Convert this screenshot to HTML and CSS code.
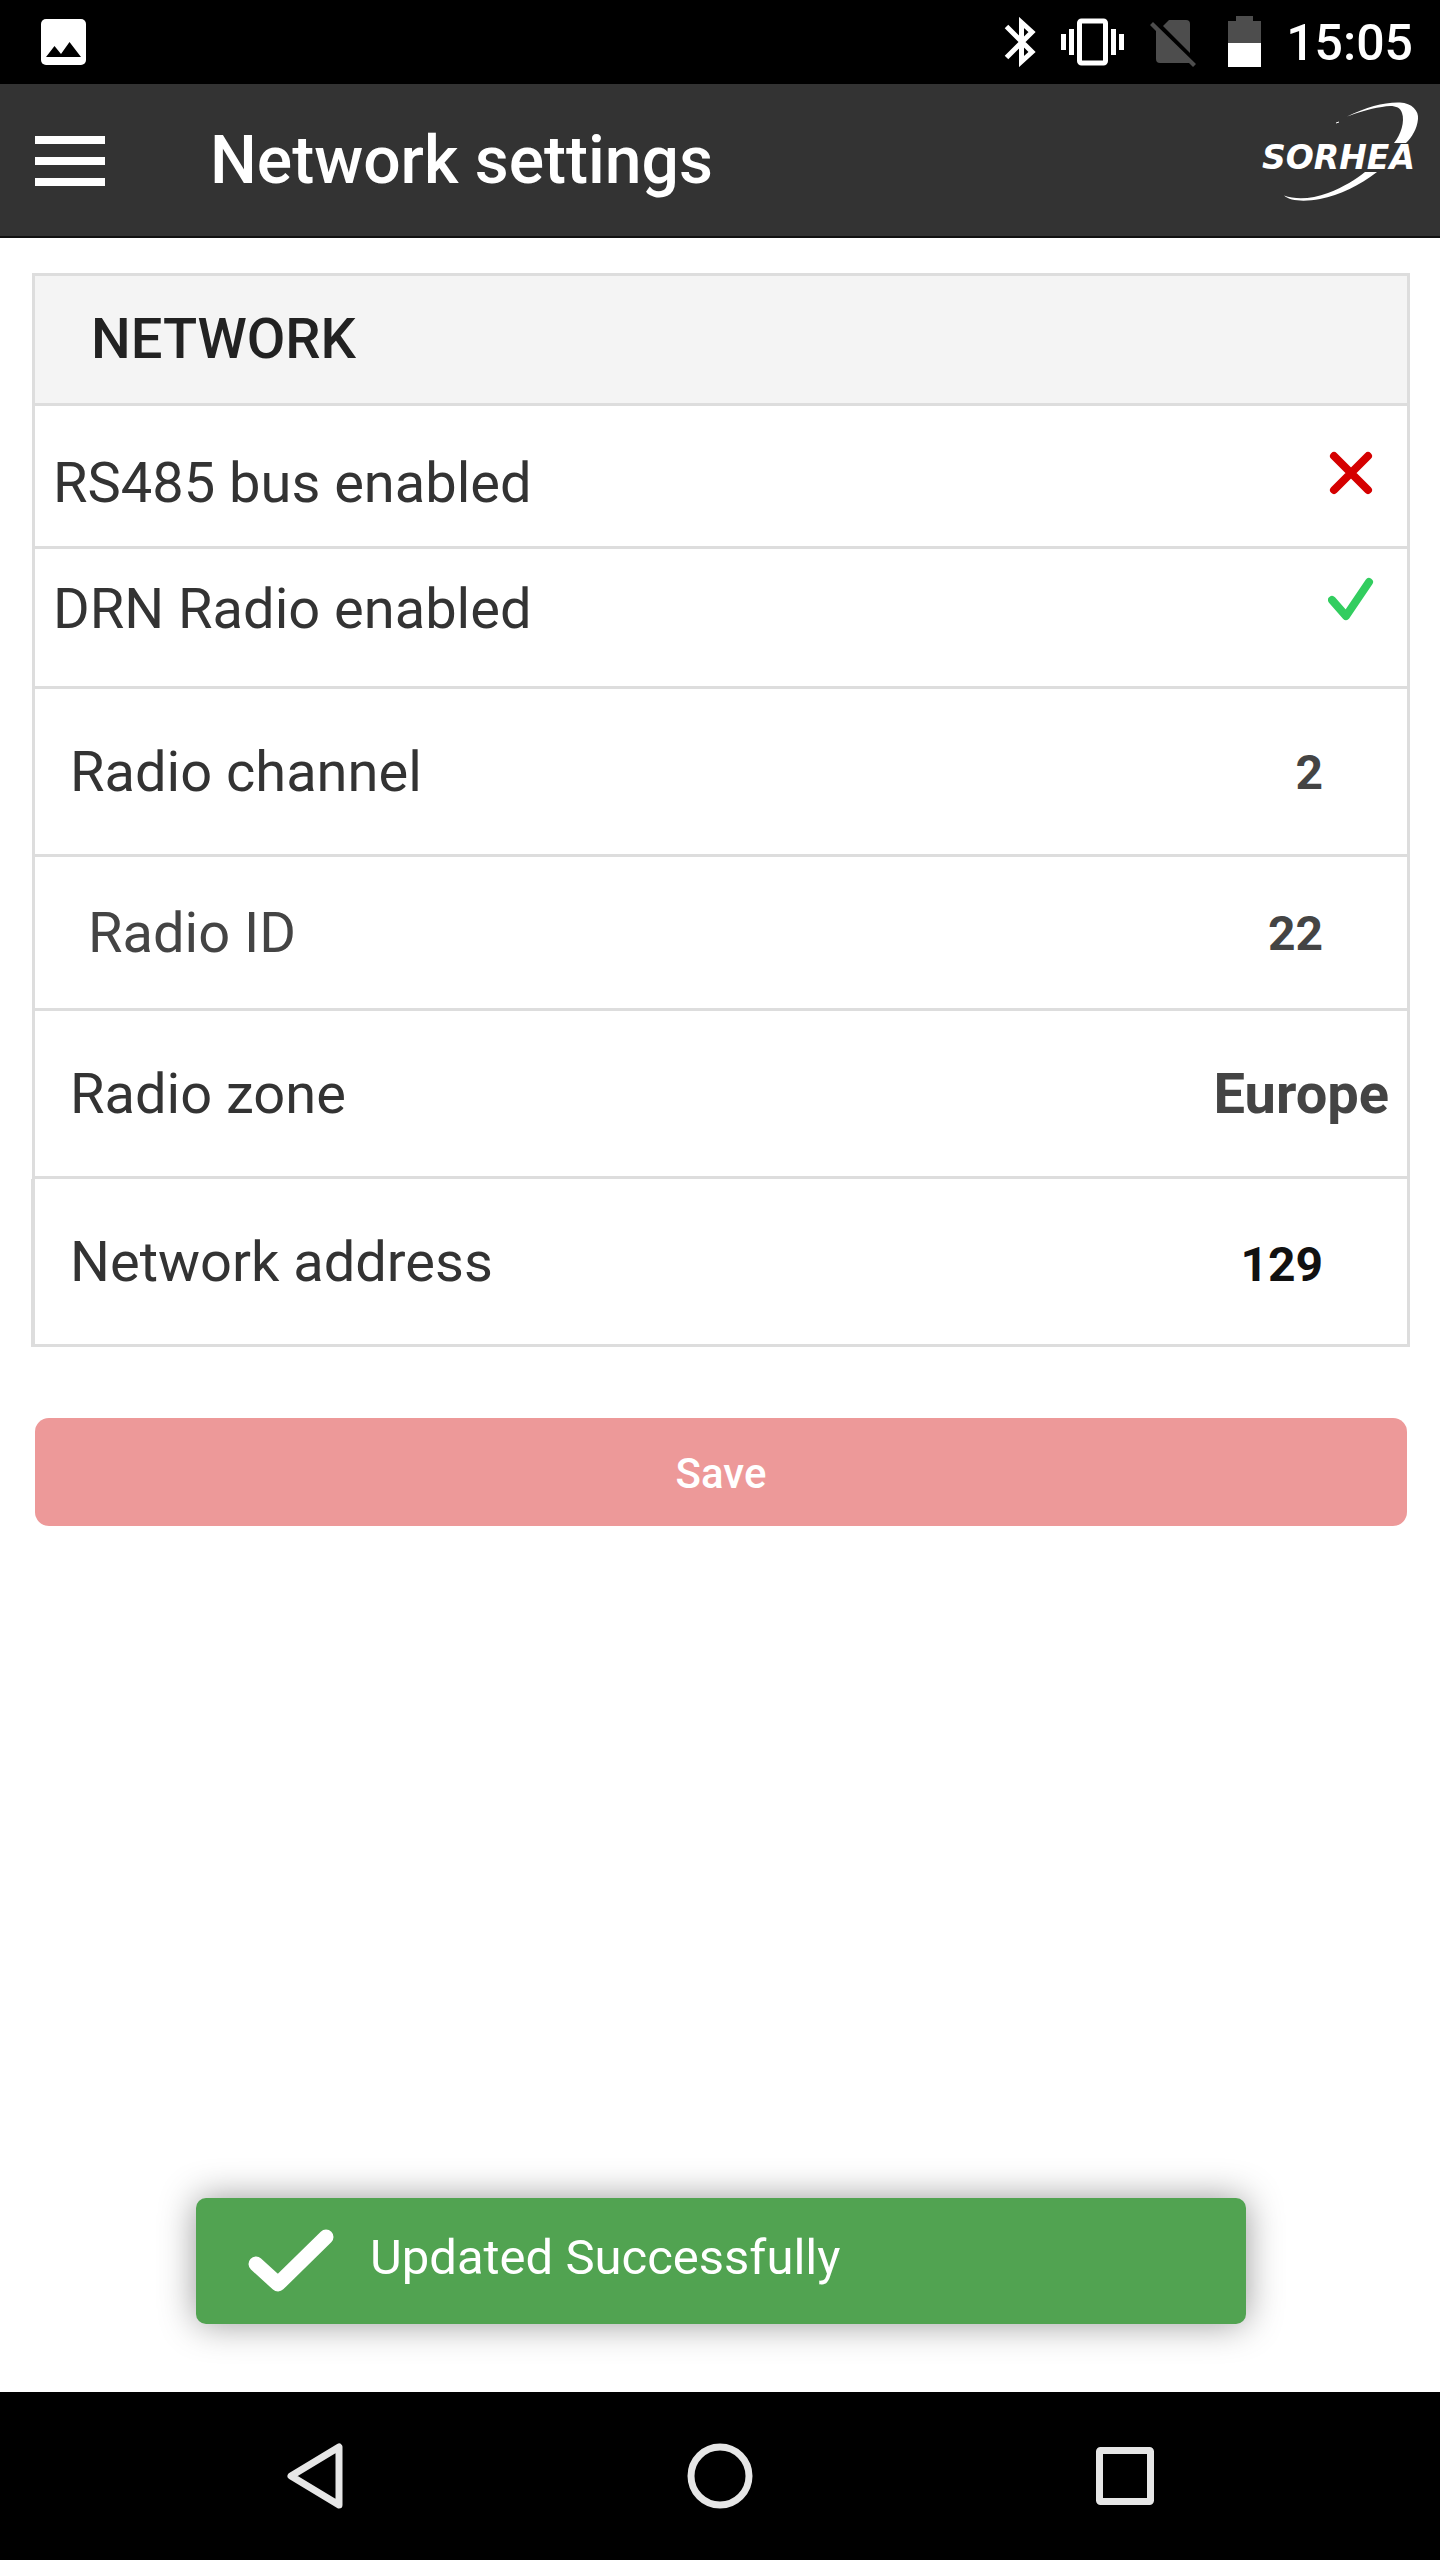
FILE: index.html
```html
<!DOCTYPE html>
<html lang="en">
<head>
<meta charset="utf-8">
<meta name="viewport" content="width=device-width, initial-scale=1">
<title>Network settings</title>
<link rel="stylesheet" href="styles.css">
</head>
<body>
<div class="status-bar">
  <svg width="45" height="46" viewBox="0 0 45 46" role="img" aria-label="Screenshot saved"><rect width="45" height="46" rx="5" fill="#fff"/><path d="M5 38 13.500 27l6.500 8 8.500-12L40 38z" fill="#000"/></svg>
  <div class="status-icons">
    <svg width="32" height="50" viewBox="0 0 32 50" role="img" aria-label="Bluetooth"><path d="M2.500 9.500 28 35 17.500 44.500V5.500L28 15 2.500 40.500" fill="none" stroke="#fff" stroke-width="5"/></svg>
    <svg width="64" height="50" viewBox="0 0 64 50" role="img" aria-label="Vibrate"><rect x="18.500" y="4" width="26" height="42" rx="2" fill="none" stroke="#fff" stroke-width="5"/><path d="M0 17h5v16H0zM8 12h5v26H8zM50 12h5v26h-5zM58 17h5v16h-5z" fill="#fff"/></svg>
    <svg width="46" height="50" viewBox="0 0 46 50" role="img" aria-label="No SIM card"><path d="M19 3h17q4 0 4 4v29L13 9z" fill="#4d4d4d"/><path d="M3 5l43 42-3 3-4-4H10q-4 0-4-4V14L0 8z" fill="#4d4d4d"/></svg>
    <svg class="battery" width="33" height="52" viewBox="0 0 33 52" role="img" aria-label="Battery half full"><path d="M8 0h17v5h8v22H0V5h8z" fill="#4d4d4d"/><path d="M0 27h33v24H0z" fill="#fff"/></svg>
    <time class="clock">15:05</time>
  </div>
</div>
<header class="app-bar">
  <button class="menu-button" type="button" aria-label="Menu"><svg width="70" height="50" viewBox="0 0 70 50"><path d="M0 0h70v8H0zM0 21h70v8H0zM0 42h70v8H0z" fill="#fff"/></svg></button>
  <h1 class="title">Network settings</h1>
  <svg width="180" height="120" viewBox="0 0 180 120" role="img" aria-label="Sorhea"><path d="M95 15.500C115 6 132 1 148 1.500C160 2 167 10 166 18C165 28 160 36 154 42H142C149 34 153 20 150 12C148 5 140 4 130 6C116 8 105 12 95 15.500zM125 71C108 84 88 94 68 98C52 101 38 100 32 94.500C44 99 60 98 76 92C92 86 104 78 113 71z" fill="#fff"/><path d="M84 22l3-1" stroke="#fff"/><text class="logo-text" x="10" y="68">SORHEA</text></svg>
</header>
<main class="content">
  <form class="form">
    <section class="card">
      <h2 class="card-title">NETWORK</h2>
      <div class="row row-bus"><span>RS485 bus enabled</span><svg width="46" height="46" viewBox="0 0 46 46" role="img" aria-label="No"><path d="M6 6 40 40M40 6 6 40" fill="none" stroke="#d50000" stroke-width="8" stroke-linecap="round"/></svg></div>
      <div class="row row-radio"><span>DRN Radio enabled</span><svg width="46" height="46" viewBox="0 0 46 46" role="img" aria-label="Yes"><path d="M4 24 18 40 41 6" fill="none" stroke="#32cd5f" stroke-width="8" stroke-linecap="round" stroke-linejoin="round"/></svg></div>
      <div class="row row-field"><label for="channel">Radio channel</label><input class="value" id="channel" type="text" inputmode="numeric" value="2"></div>
      <div class="row row-id"><label for="radio-id">Radio ID</label><input class="value" id="radio-id" type="text" inputmode="numeric" value="22"></div>
      <div class="row row-field"><label for="zone">Radio zone</label><select class="zone" id="zone"><option>Europe</option></select></div>
      <div class="row row-field row-address"><label for="address">Network address</label><input class="value" id="address" type="text" inputmode="numeric" value="129"></div>
    </section>
    <button class="save" type="submit" disabled>Save</button>
  </form>
  <div class="toast" role="status"><svg width="86" height="66" viewBox="0 0 86 66" aria-hidden="true"><path d="M8 36 30 56 78 9" fill="none" stroke="#fff" stroke-width="15" stroke-linecap="round" stroke-linejoin="round"/></svg><span class="toast-text">Updated Successfully</span></div>
</main>
<nav class="nav-bar">
  <button type="button" aria-label="Back"><svg width="66" height="66" viewBox="0 0 66 66"><path d="M57 4v58L9 33z" fill="none" stroke="#e6e6e6" stroke-width="7" stroke-linejoin="round"/></svg></button>
  <button type="button" aria-label="Home"><svg width="66" height="66" viewBox="0 0 66 66"><circle cx="33" cy="33" r="29" fill="none" stroke="#e6e6e6" stroke-width="7"/></svg></button>
  <button type="button" aria-label="Recent apps"><svg width="66" height="66" viewBox="0 0 66 66"><rect x="7.500" y="7.500" width="51" height="51" rx="1" fill="none" stroke="#e6e6e6" stroke-width="7"/></svg></button>
</nav>
</body>
</html>
```
FILE: styles.css
```css
* {
  box-sizing: border-box;
}

body {
  margin: 0;
  min-height: 100vh;
  display: flex;
  flex-direction: column;
  background: #fff;
  color: #333;
  font-family: Roboto, sans-serif;
  font-size: 56px;
  line-height: 66px;
}

svg {
  display: block;
  flex: none;
}

button {
  margin: 0;
  padding: 0;
  border: 0;
  background: none;
  font-family: inherit;
}

/* System status bar */
.status-bar {
  display: flex;
  align-items: center;
  justify-content: space-between;
  height: 84px;
  padding: 0 27px 0 41px;
  background: #000;
  color: #fff;
}

.status-icons {
  display: flex;
  align-items: center;
  gap: 25px;
}

.battery {
  margin-left: 7px;
}

.clock {
  padding-top: 2px;
  font-size: 50px;
  font-weight: 500;
  line-height: 52px;
}

/* App bar */
.app-bar {
  display: flex;
  align-items: center;
  height: 154px;
  padding: 2px 8px 0 35px;
  border-bottom: 2px solid #111;
  background: #333;
  color: #fff;
}

.title {
  flex: 1;
  margin: 0 0 0 105px;
  font-size: 66px;
  font-weight: 500;
  line-height: 80px;
}

.logo-text {
  fill: #fff;
  font: italic bold 33px "DejaVu Sans", sans-serif;
}

/* Settings card */
.content {
  flex: 1;
  display: flex;
  flex-direction: column;
  padding: 35px 30px 68px 32px;
}

.card-title {
  margin: 0;
  padding: 30px 56px 31px;
  border: 3px solid #ddd;
  background: #f4f4f4;
  color: #222;
  font-size: 56px;
  font-weight: 500;
  line-height: 66px;
}

.row {
  display: flex;
  align-items: center;
  justify-content: space-between;
  border: 3px solid #ddd;
  border-top: 0;
}

.row-bus,
.row-radio {
  align-items: flex-start;
  padding-left: 18px;
  padding-right: 33px;
}

.row-bus {
  padding-top: 44px;
  padding-bottom: 30px;
}

.row-radio {
  padding-top: 27px;
  padding-bottom: 44px;
}

.row-field {
  padding: 50px 18px 49px 35px;
}

.row-id {
  padding: 43px 18px 42px 53px;
  color: #444;
}

.row-address {
  margin-left: -1px;
  border-left-width: 4px;
}

.value,
.zone {
  margin: 0;
  border: 0;
  background: none;
  color: #444;
  font-family: inherit;
  font-weight: 700;
  text-align: right;
}

.value {
  width: 400px;
  height: 66px;
  padding: 0 66px 0 0;
  font-size: 48px;
}

.row-address .value {
  padding-top: 4px;
  color: #111;
}

.zone {
  height: 66px;
  padding: 0;
  appearance: none;
  font-size: 56px;
  line-height: 66px;
}

.save {
  display: block;
  width: calc(100% - 6px);
  height: 108px;
  margin: 71px 3px 0;
  padding-top: 2px;
  border-radius: 14px;
  background: #ed9999;
  color: #fff;
  font-size: 42px;
  font-weight: 500;
}

/* Notification */
.toast {
  display: flex;
  align-items: center;
  gap: 36px;
  width: 1050px;
  max-width: 100%;
  height: 126px;
  margin: auto auto 0;
  padding-left: 52px;
  border-radius: 10px;
  background: #51a351;
  box-shadow: 0 0 36px #999;
  color: #fff;
  font-size: 49px;
}

.toast-text {
  padding-bottom: 6px;
}

/* System navigation bar */
.nav-bar {
  display: grid;
  grid-template-columns: repeat(3, 1fr);
  justify-items: center;
  align-items: center;
  height: 168px;
  padding: 0 112px;
  background: #000;
}
```
